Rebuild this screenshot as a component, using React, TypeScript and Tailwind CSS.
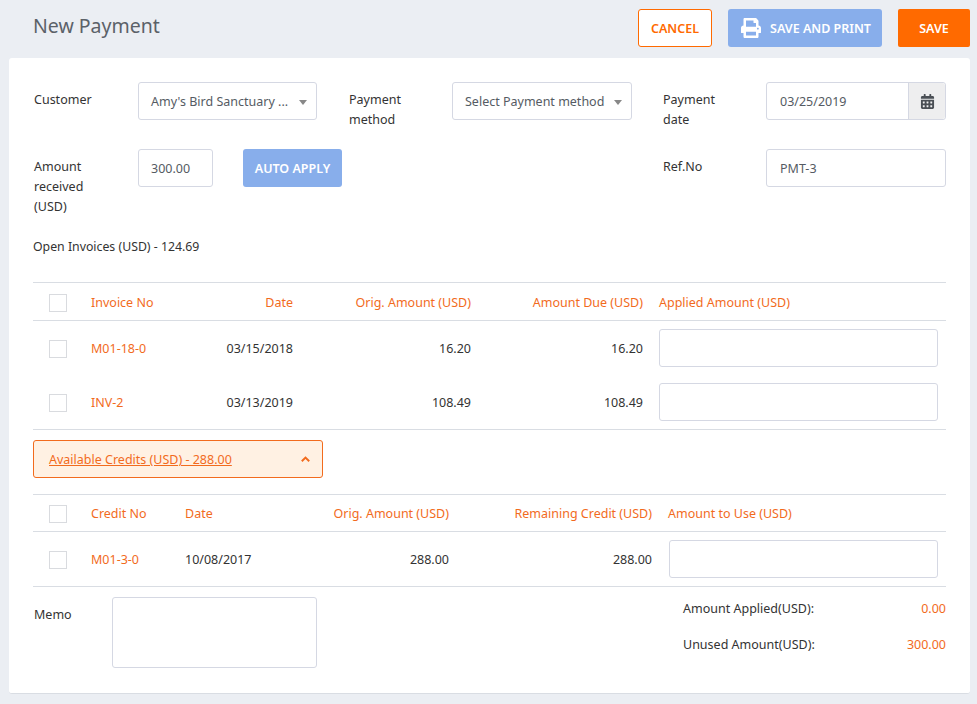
import { FaCalendarAlt, FaPrint } from "react-icons/fa";

const invoices = [
  { no: "M01-18-0", date: "03/15/2018", orig: "16.20", due: "16.20" },
  { no: "INV-2", date: "03/13/2019", orig: "108.49", due: "108.49" },
];

const fieldBox = "h-[38px] shrink-0 rounded-[3px] border border-[#d5d8e3] bg-white pl-3 pr-[9px] pt-0.5 flex items-center text-[#555b63]";
const invoiceRow = "grid grid-cols-[58px_130px_72px_178px_172px_1fr] items-center [&>span]:pt-0.5";
const creditRow = "grid grid-cols-[58px_94px_80px_184px_203px_1fr] items-center [&>span]:pt-0.5";

function Check() {
  return <span className="block h-[18px] w-[18px] border border-[#d9dbdf] bg-white" />;
}

function Caret() {
  return <span className="ml-auto h-0 w-0 shrink-0 border-x-[4px] border-t-[5px] border-x-transparent border-t-[#888]" />;
}

export default function App() {
  return (
    <div className="h-[704px] w-[977px] overflow-hidden bg-[#ebeef3] text-[12.5px] leading-5 text-[#333] [font-family:'Noto_Sans','Open_Sans',sans-serif]">
      {/* Top bar */}
      <header className="flex h-[58px] items-start pl-[33px] pr-[7px]">
        <h1 className="mt-[14px] text-[19.5px] leading-6 text-[#5b6168]">New Payment</h1>
        <div className="ml-auto mt-[9px] flex gap-4 font-semibold">
          <button className="h-[38px] w-[74px] rounded-[3px] border border-[#ff6a00] bg-white pt-0.5 text-[#ff6a00]">CANCEL</button>
          <button className="flex h-[38px] w-[154px] items-center rounded-[3px] bg-[#88aeeb] pl-[13px] text-white">
            <FaPrint className="mr-[9px] text-[20px]" />
            <span className="pt-0.5">SAVE AND PRINT</span>
          </button>
          <button className="h-[38px] w-[72px] rounded-[2px] bg-[#ff6a00] pt-0.5 text-white">SAVE</button>
        </div>
      </header>

      {/* Card */}
      <main className="ml-[9px] mr-[7px] h-[636px] rounded-[3px] border-b border-[#d9dde3] bg-white pl-6 pr-6 pt-6">
        <div className="grid grid-cols-[284px_284px_283px] gap-x-[31px]">
          <div className="flex h-[67px] pl-px">
            <label className="w-[104px] shrink-0 pt-2">Customer</label>
            <div className={`${fieldBox} w-[179px]`}>
              <span>Amy's Bird Sanctuary ...</span>
              <Caret />
            </div>
          </div>
          <div className="flex pl-px">
            <label className="w-[103px] shrink-0 pt-2">Payment<br />method</label>
            <div className={`${fieldBox} w-[180px]`}>
              <span>Select Payment method</span>
              <Caret />
            </div>
          </div>
          <div className="flex">
            <label className="w-[103px] shrink-0 pt-2">Payment<br />date</label>
            <div className="flex h-[38px] w-[180px] rounded-[3px] border border-[#d5d8e3]">
              <span className="flex flex-1 items-center pl-[13px] pt-0.5 text-[#555b63]">03/25/2019</span>
              <span className="flex w-[37px] items-center justify-center rounded-r-[3px] border-l border-[#d5d8e3] bg-[#eeeeef] text-[#4a4f55]">
                <FaCalendarAlt className="text-[15px]" />
              </span>
            </div>
          </div>

          <div className="flex h-[88px] pl-px">
            <label className="w-[104px] shrink-0 pt-2">Amount<br />received<br />(USD)</label>
            <div className={`${fieldBox} w-[75px]`}>300.00</div>
            <button className="ml-[30px] h-[38px] w-[99px] shrink-0 rounded-[3px] bg-[#88aeeb] pt-0.5 font-semibold text-white">AUTO APPLY</button>
          </div>
          <div />
          <div className="flex">
            <label className="w-[103px] shrink-0 pt-2">Ref.No</label>
            <div className={`${fieldBox} w-[180px] pl-[13px]`}>PMT-3</div>
          </div>
        </div>

        <p className="h-[19px] text-[12.3px] leading-[19px]">Open Invoices (USD) - 124.69</p>

        {/* Invoices */}
        <div className="mt-[26px] border-y border-[#d9dde3]">
          <div className={`${invoiceRow} h-[38px] border-b border-[#d9dde3] text-[#f26b1d]`}>
            <span className="pl-4"><Check /></span>
            <span>Invoice No</span>
            <span className="text-right">Date</span>
            <span className="text-right">Orig. Amount (USD)</span>
            <span className="text-right">Amount Due (USD)</span>
            <span className="pl-4">Applied Amount (USD)</span>
          </div>
          <div className="pb-2 pt-2">
            {invoices.map((inv) => (
              <div key={inv.no} className={`${invoiceRow} mb-4 h-[38px] last:mb-0`}>
                <span className="pl-4"><Check /></span>
                <span className="text-[#f26b1d]">{inv.no}</span>
                <span className="text-right">{inv.date}</span>
                <span className="text-right">{inv.orig}</span>
                <span className="text-right">{inv.due}</span>
                <span className="pl-4 pr-2 pt-0!"><span className={`${fieldBox} w-full`} /></span>
              </div>
            ))}
          </div>
        </div>

        {/* Credits */}
        <button className="mt-[10px] flex h-[38px] w-[290px] items-center rounded-[3px] border border-[#f26b1d] bg-[#fff1e3] pl-[15px] pr-[12px] text-[#f26b1d]">
          <span className="pt-0.5 underline">Available Credits (USD) - 288.00</span>
          <svg className="ml-auto" width="9" height="6" viewBox="0 0 9 6" fill="none" stroke="currentColor" strokeWidth="2">
            <polyline points="0.8,5.2 4.5,1.6 8.2,5.2" />
          </svg>
        </button>

        <div className="mt-4 border-y border-[#d9dde3]">
          <div className={`${creditRow} h-[37px] border-b border-[#d9dde3] text-[#f26b1d]`}>
            <span className="pl-4"><Check /></span>
            <span>Credit No</span>
            <span>Date</span>
            <span className="text-right">Orig. Amount (USD)</span>
            <span className="text-right">Remaining Credit (USD)</span>
            <span className="pl-4">Amount to Use (USD)</span>
          </div>
          <div className={`${creditRow} h-[54px]`}>
            <span className="pl-4"><Check /></span>
            <span className="text-[#f26b1d]">M01-3-0</span>
            <span>10/08/2017</span>
            <span className="text-right">288.00</span>
            <span className="text-right">288.00</span>
            <span className="pl-[17px] pr-2 pt-0!"><span className={`${fieldBox} w-full`} /></span>
          </div>
        </div>

        {/* Memo and totals */}
        <div className="mt-[10px] flex justify-between">
          <div className="flex pl-px">
            <label className="w-[78px] shrink-0 pt-2">Memo</label>
            <div className="h-[71px] w-[205px] rounded-[3px] border border-[#d5d8e3]" />
          </div>
          <div className="w-[263px] pt-0.5">
            <div className="flex h-[36px] items-start justify-between">
              <span>Amount Applied(USD):</span>
              <span className="text-[#f26b1d]">0.00</span>
            </div>
            <div className="flex items-start justify-between">
              <span>Unused Amount(USD):</span>
              <span className="text-[#f26b1d]">300.00</span>
            </div>
          </div>
        </div>
      </main>
    </div>
  );
}
